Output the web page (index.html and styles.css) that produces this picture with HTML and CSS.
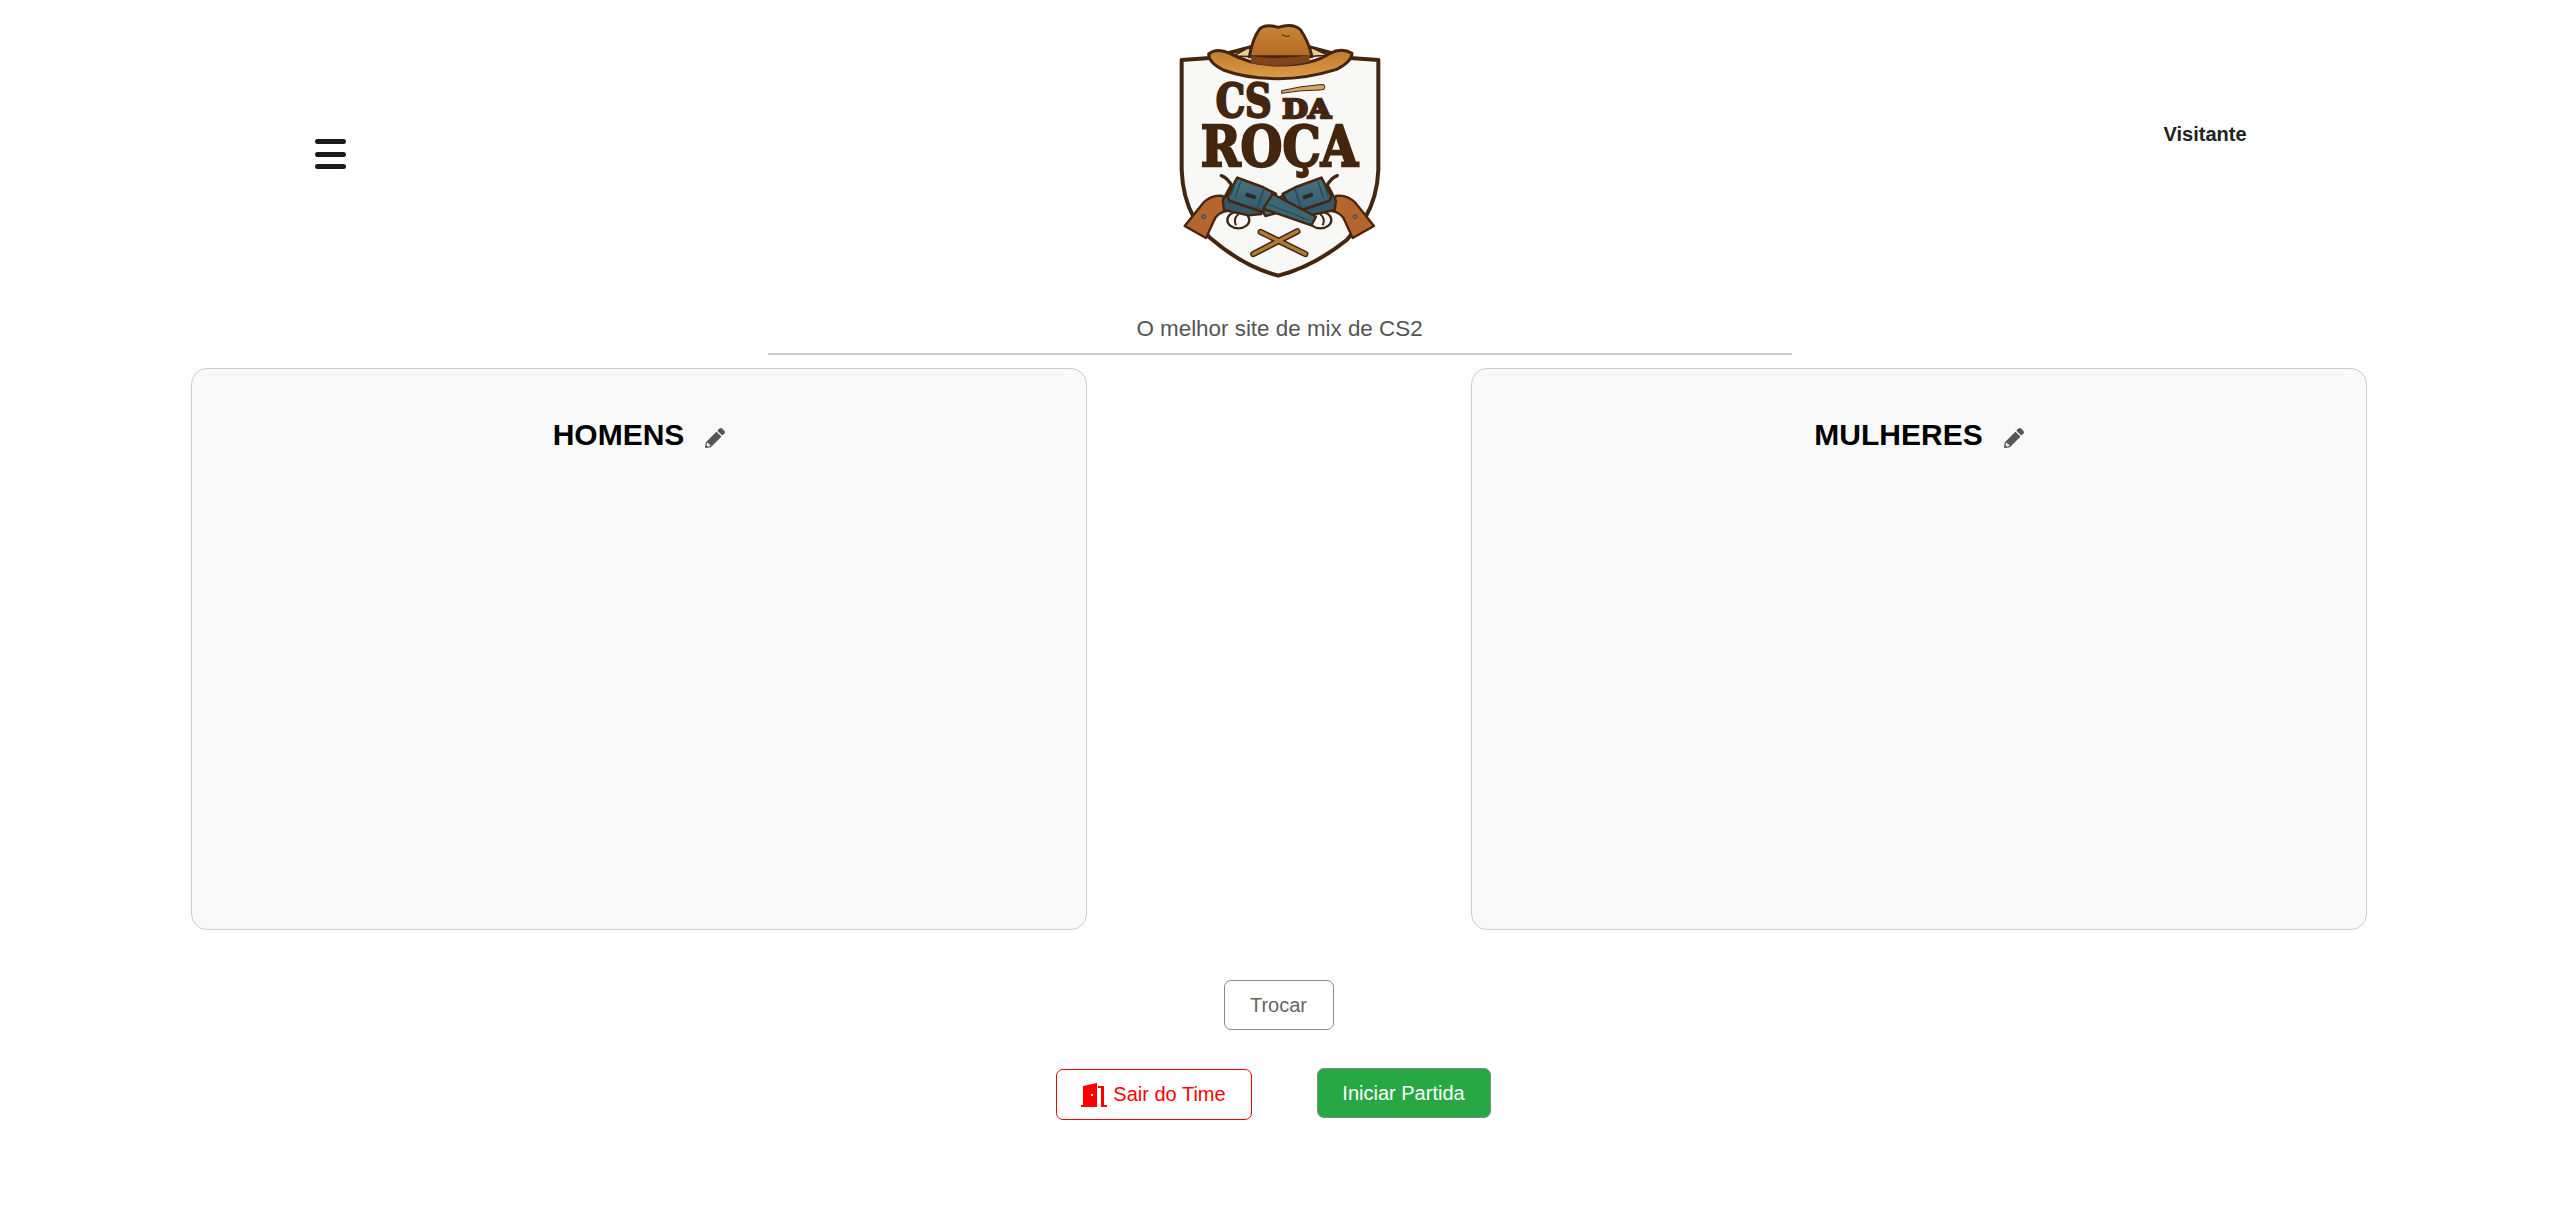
FILE: index.html
```html
<!DOCTYPE html>
<html lang="pt-BR">
<head>
<meta charset="utf-8">
<title>CS da Roça</title>
<link rel="stylesheet" href="styles.css">
</head>
<body>
<header class="header">
  <button class="menu" aria-label="Menu"><span></span><span></span><span></span></button>
  <svg class="logo" viewBox="0 0 780 840" role="img" aria-label="CS da Roça">
    <defs>
      <linearGradient id="crown" x1="0" y1="0" x2="0" y2="1"><stop offset="0" stop-color="#c8853a"/><stop offset="1" stop-color="#b56a24"/></linearGradient>
      <linearGradient id="brim" x1="0" y1="0" x2="0" y2="1"><stop offset="0" stop-color="#c27a2c"/><stop offset="1" stop-color="#dc9c4a"/></linearGradient>
      <linearGradient id="steel" x1="0" y1="0" x2="0" y2="1"><stop offset="0" stop-color="#4a7482"/><stop offset="1" stop-color="#33586a"/></linearGradient>
      <g id="gun">
        <path d="M104 648 L160 578 Q188 552 218 558 L236 602 Q200 606 190 636 L168 684 Z" fill="#b5652e" stroke="#44260f" stroke-width="7" stroke-linejoin="round"/>
        <circle cx="161" cy="620" r="6" fill="#4b7c8c" stroke="#44260f" stroke-width="2"/>
        <ellipse cx="265" cy="630" rx="33" ry="25" fill="#f8f8f7" stroke="#44260f" stroke-width="7"/>
        <path d="M266 612 Q248 626 258 646" fill="none" stroke="#44260f" stroke-width="6"/>
        <path d="M214 497 Q234 504 248 532" fill="none" stroke="#44260f" stroke-width="10" stroke-linecap="round"/>
        <path d="M218 572 L240 530 L340 590 L334 612 L296 616 L222 600 Z" fill="#33586a" stroke="#44260f" stroke-width="7" stroke-linejoin="round"/>
        <path d="M262 503 L340 532 L378 552 L362 584 L338 606 L238 572 L232 558 Z" fill="url(#steel)" stroke="#44260f" stroke-width="8" stroke-linejoin="round"/>
        <path d="M256 518 L242 558 M272 514 L256 562" stroke="#27485a" stroke-width="4"/>
        <rect x="286" y="552" width="32" height="12" rx="3" transform="rotate(20 302 558)" fill="#2c2a26"/>
        <path d="M342 535 L322 596" stroke="#2c4e5c" stroke-width="6"/>
      </g>
    </defs>
    <path class="shield" d="M95 150 L180 144 L300 112 L480 112 L600 144 L685 150 L685 480 Q682 560 645 625 L590 690 Q490 770 385 797 Q280 770 178 682 L130 620 Q98 560 95 480 Z"/>
    <path d="M250 138 L300 110 L300 140 Z M480 110 L532 135 L480 140 Z" fill="#e6cf9f" stroke="#44260f" stroke-width="5"/>
    <path d="M298 140 Q308 85 328 58 Q345 40 385 52 Q430 38 452 60 Q476 95 486 140 Z" fill="url(#crown)" stroke="#44260f" stroke-width="9" stroke-linejoin="round"/>
    <path d="M176 132 Q200 112 240 130 Q300 165 390 165 Q490 165 540 130 Q575 112 606 130 Q606 155 560 178 Q470 206 385 206 Q290 206 220 180 Q176 158 176 132 Z" fill="url(#brim)" stroke="#44260f" stroke-width="9" stroke-linejoin="round"/>
    <path d="M302 138 Q390 152 480 134 L478 156 Q390 176 304 160 Z" fill="#7d4519"/>
    <path d="M395 74 Q408 82 420 78" fill="none" stroke="#44260f" stroke-width="3"/>
    <path d="M395 242 Q450 228 510 224 L522 224 Q527 231 522 238 L510 240 Q450 240 395 250 Z" fill="#d4a768" stroke="#44260f" stroke-width="3"/>
    <text class="logo-text" x="197" y="322" font-size="138" textLength="168" lengthAdjust="spacingAndGlyphs">CS</text>
    <text class="logo-text" x="397" y="323" font-size="80" textLength="146" lengthAdjust="spacingAndGlyphs">DA</text>
    <text class="logo-text" x="152" y="468" font-size="166" textLength="472" lengthAdjust="spacingAndGlyphs">ROÇA</text>
    <g transform="matrix(-1 0 0 1 776 0)">
      <path d="M368 552 L446 592 L430 618 L340 596 Z" fill="#3f6c7c" stroke="#44260f" stroke-width="7" stroke-linejoin="round"/>
      <use href="#gun"/>
    </g>
    <use href="#gun"/>
    <path d="M368 552 L498 620 L484 646 L340 596 Z" fill="#3d6675" stroke="#44260f" stroke-width="7" stroke-linejoin="round"/>
    <path d="M352 582 L480 632" stroke="#2c4e5c" stroke-width="4"/>
    <path d="M310 732 L442 664" stroke="#44260f" stroke-width="19" stroke-linecap="round"/>
    <path d="M332 666 L466 732" stroke="#44260f" stroke-width="19" stroke-linecap="round"/>
    <path d="M332 666 L466 732" stroke="#b07a38" stroke-width="10" stroke-linecap="round"/>
    <path d="M310 732 L442 664" stroke="#b07a38" stroke-width="10" stroke-linecap="round"/>
  </svg>
  <div class="user">Visitante</div>
</header>

<p class="tagline">O melhor site de mix de CS2</p>

<main class="teams">
  <section class="team">
    <h2 class="team-title">HOMENS
      <svg class="pencil" viewBox="0 0 512 512"><path d="M497.900 142.100l-46.100 46.100c-4.700 4.700-12.300 4.700-17 0l-111-111c-4.700-4.700-4.700-12.300 0-17l46.100-46.100c18.700-18.700 49.100-18.700 67.900 0l60.100 60.100c18.800 18.700 18.800 49.100 0 67.900zM284.200 99.800L21.600 362.400.4 483.900c-2.900 16.400 11.400 30.600 27.800 27.800l121.500-21.300 262.600-262.600c4.700-4.700 4.700-12.300 0-17l-111-111c-4.800-4.700-12.400-4.700-17.100 0zM88 424h48v36.300l-64.500 11.300-31.100-31.100L51.700 376H88v48z"/></svg>
    </h2>
  </section>
  <section class="team">
    <h2 class="team-title">MULHERES
      <svg class="pencil" viewBox="0 0 512 512"><path d="M497.900 142.100l-46.100 46.100c-4.700 4.700-12.300 4.700-17 0l-111-111c-4.700-4.700-4.700-12.300 0-17l46.100-46.100c18.700-18.700 49.100-18.700 67.900 0l60.100 60.100c18.800 18.700 18.800 49.100 0 67.900zM284.200 99.800L21.600 362.400.4 483.900c-2.900 16.400 11.400 30.600 27.800 27.800l121.500-21.300 262.600-262.600c4.700-4.700 4.700-12.300 0-17l-111-111c-4.800-4.700-12.400-4.700-17.100 0zM88 424h48v36.300l-64.500 11.300-31.100-31.100L51.700 376H88v48z"/></svg>
    </h2>
  </section>
</main>

<div class="swap-row"><button class="btn btn-swap">Trocar</button></div>

<div class="action-row">
  <button class="btn btn-leave">
    <svg class="door" viewBox="0 0 26 24"><path d="M0 24v-2h2V3l14-3v24H3zm10-13v2h2v-2zM17 3h6v19h3v2h-6V5h-3z" fill-rule="evenodd"/></svg>
    Sair do Time
  </button>
  <button class="btn btn-start">Iniciar Partida</button>
</div>
</body>
</html>
```
FILE: styles.css
```css
* { box-sizing: border-box; }

body {
  margin: 0;
  background: #fff;
  font-family: "Liberation Sans", Arial, sans-serif;
}

.header {
  display: grid;
  grid-template-columns: 1fr 260px 1fr;
  padding-top: 10px;
}

.menu {
  display: flex;
  flex-direction: column;
  justify-content: space-between;
  align-self: start;
  width: 31px;
  height: 30px;
  margin: 129px 0 0 315px;
  padding: 0;
  border: 0;
  background: none;
}

.menu span {
  display: block;
  height: 5px;
  border-radius: 3px;
  background: #1a1a1a;
}

.logo {
  display: block;
  width: 260px;
  height: 280px;
}

.shield {
  fill: #f8f8f7;
  stroke: #44260f;
  stroke-width: 12;
  stroke-linejoin: round;
}

.logo-text {
  font-family: "DejaVu Serif", serif;
  font-weight: 700;
  fill: #44260f;
  stroke: #44260f;
  stroke-width: 7;
}

.user {
  margin: 112px 0 0 754px;
  font-size: 20px;
  line-height: 24px;
  font-weight: 700;
  color: #222;
}

.tagline {
  width: 1024px;
  margin: 26px auto 0;
  padding-bottom: 12px;
  border-bottom: 2px solid #ccc;
  text-align: center;
  font-size: 22.4px;
  line-height: 25px;
  color: #555;
}

.teams {
  display: flex;
  justify-content: space-between;
  width: 2176px;
  margin: 13px 0 0 191px;
}

.team {
  width: 896px;
  height: 562px;
  padding-top: 49px;
  border: 1.5px solid #ccc;
  border-radius: 16px;
  background: #f9f9f9;
}

.team-title {
  display: flex;
  justify-content: center;
  align-items: center;
  gap: 21px;
  margin: 0;
  font-size: 30px;
  line-height: 34px;
  font-weight: 700;
  color: #000;
}

.pencil {
  width: 20px;
  height: 20px;
  margin-top: 5px;
  fill: #555;
}

.swap-row {
  display: flex;
  justify-content: center;
  margin-top: 50px;
  padding-right: 2px;
}

.action-row {
  display: flex;
  justify-content: center;
  align-items: flex-start;
  gap: 65px;
  margin-top: 38px;
  padding-right: 13px;
}

.btn {
  height: 50px;
  padding: 0;
  border-radius: 7px;
  font-family: inherit;
  font-size: 20px;
}

.btn-swap {
  width: 110px;
  border: 1.5px solid #888;
  background: #fff;
  color: #666;
}

.btn-leave {
  display: flex;
  justify-content: center;
  align-items: center;
  gap: 6px;
  width: 196px;
  height: 51px;
  margin-top: 1px;
  border: 1.5px solid #f00;
  background: #fff;
  color: #f00;
}

.door {
  width: 26px;
  height: 24px;
  fill: #f00;
}

.btn-start {
  width: 174px;
  border: 1.5px solid #7f8c84;
  background: #28a745;
  color: #fff;
}
```
